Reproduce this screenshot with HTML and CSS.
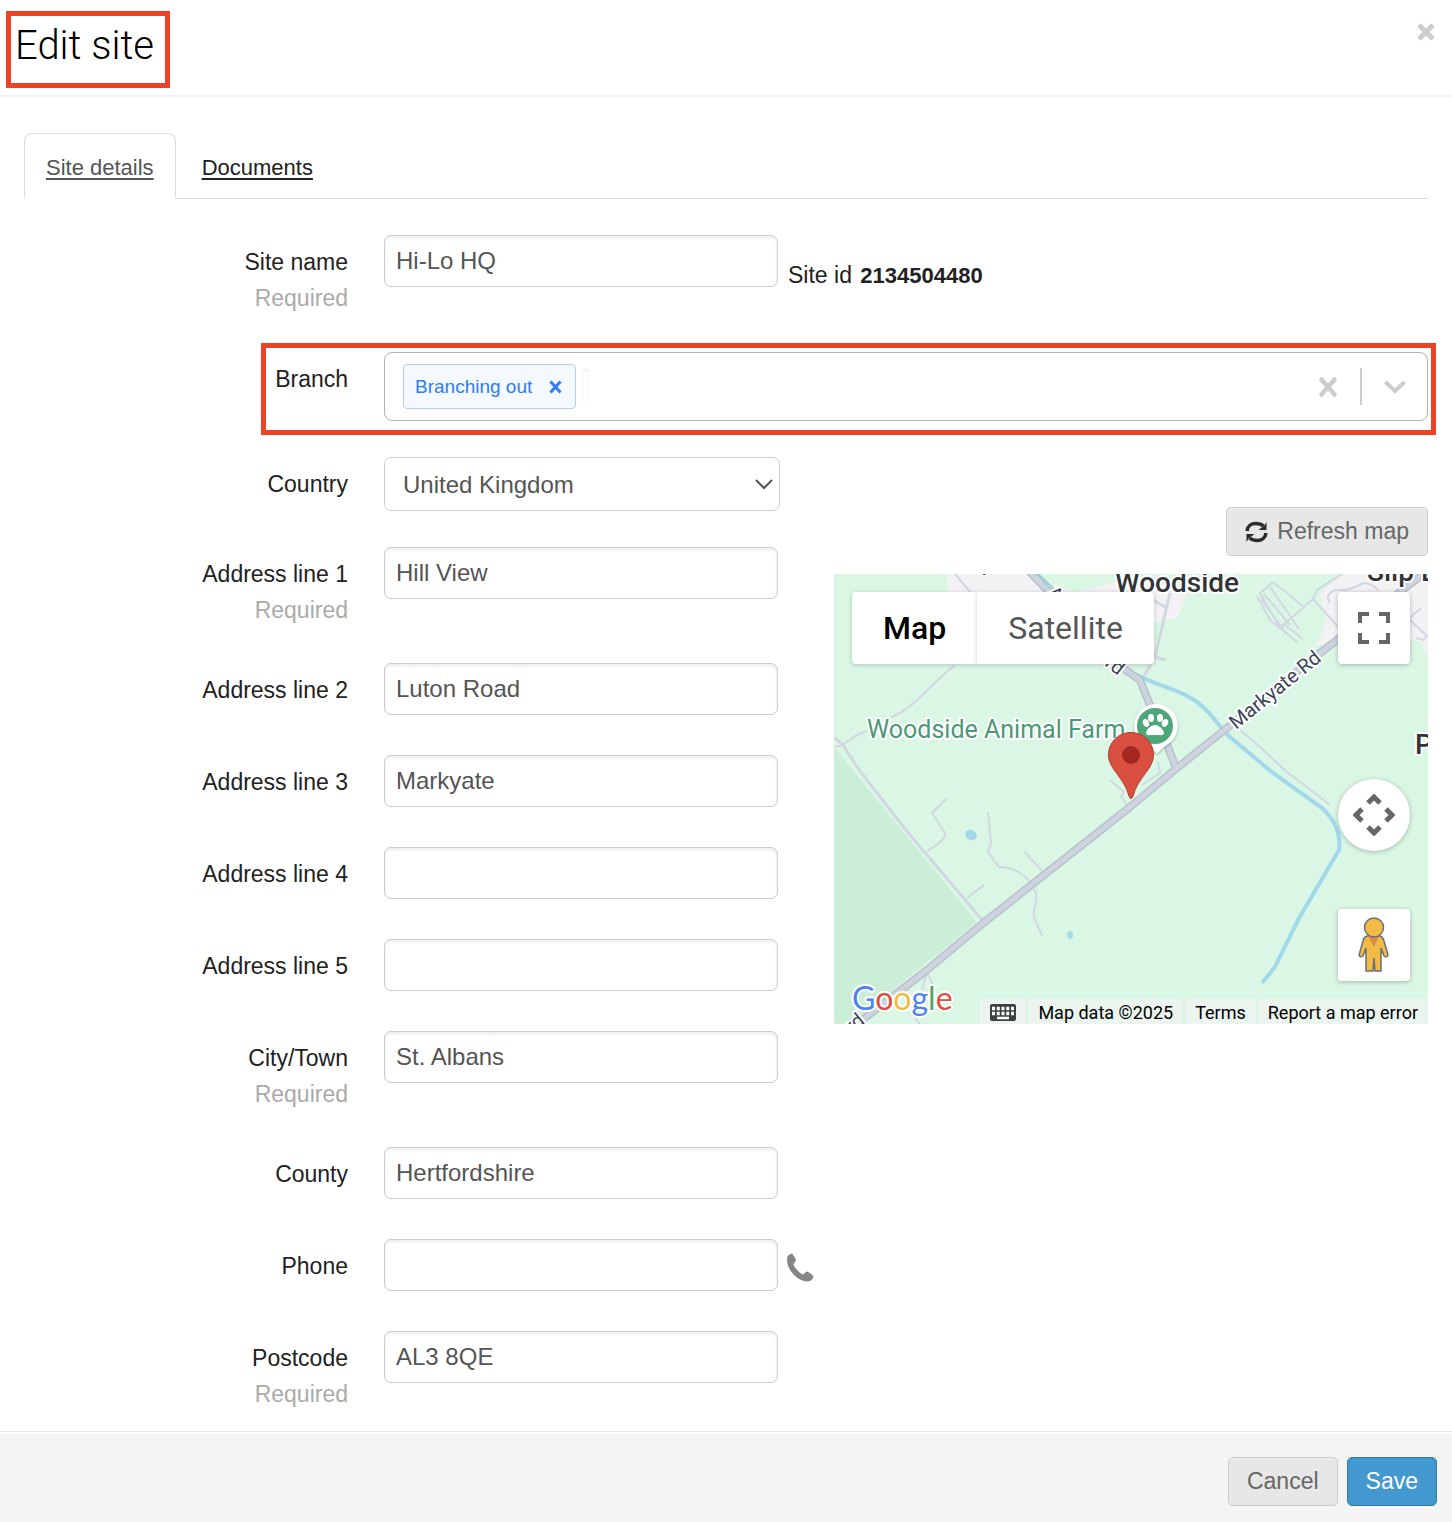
FILE: index.html
```html
<!DOCTYPE html>
<html lang="en">
<head>
<meta charset="utf-8">
<title>Edit site</title>
<meta name="viewport" content="width=device-width, initial-scale=1">
<link rel="stylesheet" href="styles.css">
</head>
<body>
<header class="dialog-header">
  <h1 class="dialog-title">Edit site</h1>
  <button class="close" type="button" aria-label="Close">
    <svg width="18" height="18" viewBox="0 0 18 18"><path d="M2 2L16 16M16 2L2 16" stroke="#ccc" stroke-width="5"/></svg>
  </button>
</header>

<form class="dialog-form">
  <main class="dialog-body">
    <nav class="tabs">
      <a class="tab tab-active" href="#details">Site details</a>
      <a class="tab" href="#documents">Documents</a>
    </nav>

    <div class="row row-name">
      <label class="label" for="name">Site name <span class="hint">Required</span></label>
      <input class="input" id="name" type="text" value="Hi-Lo HQ">
      <p class="site-id">Site id <strong>2134504480</strong></p>
    </div>

    <div class="row row-branch">
      <label class="label" for="branch">Branch</label>
      <div class="multi">
        <span class="chip">Branching out
          <button class="icon-button" type="button" aria-label="Remove Branching out">
            <svg width="13" height="14" viewBox="0 0 13 14"><path d="M1.500 1.500L11.500 12.500M11.500 1.500L1.500 12.500" stroke="#2e7cf6" stroke-width="3"/></svg>
          </button>
        </span>
        <input class="multi-input" id="branch" type="text">
        <button class="icon-button multi-clear" type="button" aria-label="Clear all">
          <svg width="18" height="20" viewBox="0 0 18 20"><path d="M2.500 2.500L15.500 17.500M15.500 2.500L2.500 17.500" stroke="#ccc" stroke-width="4.500" stroke-linecap="round"/></svg>
        </button>
        <span class="multi-divider"></span>
        <button class="icon-button" type="button" aria-label="Show branches">
          <svg width="22" height="14" viewBox="0 0 22 14"><path d="M2.500 3L11 11L19.500 3" fill="none" stroke="#ccc" stroke-width="4" stroke-linecap="round"/></svg>
        </button>
      </div>
    </div>

    <div class="address">
      <div class="address-fields">
        <div class="row row-select">
          <label class="label" for="country">Country</label>
          <div class="select-wrap">
            <select class="input select" id="country"><option>United Kingdom</option></select>
            <svg class="select-arrow" width="18" height="11" viewBox="0 0 18 11"><path d="M1 1L9 9L17 1" fill="none" stroke="#555" stroke-width="2"/></svg>
          </div>
        </div>
        <div class="row row-required">
          <label class="label" for="a1">Address line 1 <span class="hint">Required</span></label>
          <input class="input" id="a1" type="text" value="Hill View">
        </div>
        <div class="row">
          <label class="label" for="a2">Address line 2</label>
          <input class="input" id="a2" type="text" value="Luton Road">
        </div>
        <div class="row">
          <label class="label" for="a3">Address line 3</label>
          <input class="input" id="a3" type="text" value="Markyate">
        </div>
        <div class="row">
          <label class="label" for="a4">Address line 4</label>
          <input class="input" id="a4" type="text">
        </div>
        <div class="row">
          <label class="label" for="a5">Address line 5</label>
          <input class="input" id="a5" type="text">
        </div>
        <div class="row row-required">
          <label class="label" for="city">City/Town <span class="hint">Required</span></label>
          <input class="input" id="city" type="text" value="St. Albans">
        </div>
        <div class="row">
          <label class="label" for="county">County</label>
          <input class="input" id="county" type="text" value="Hertfordshire">
        </div>
        <div class="row">
          <label class="label" for="phone">Phone</label>
          <input class="input" id="phone" type="tel">
          <svg class="phone-icon" width="28" height="30" viewBox="0 0 28 30"><path d="M1 6C1 3 3 1 6 .500C7.500 2 9.500 5 10 7.500C9.500 9 7.500 10 7.500 11.500C9 15.500 13.500 20 17 21.500C18.500 21 19.500 18.500 21 18.500C23.500 19.500 26.500 21.500 27.500 23.500C27 26.500 24 28.500 21 28.500C12 28.500 .500 17 1 6Z" fill="#868686"/></svg>
        </div>
        <div class="row row-required">
          <label class="label" for="postcode">Postcode <span class="hint">Required</span></label>
          <input class="input" id="postcode" type="text" value="AL3 8QE">
        </div>
      </div>

      <section class="map-column">
        <button class="button" type="button">
          <svg width="23" height="22" viewBox="0 0 23 22"><g fill="none" stroke="#2b2b2b" stroke-width="3.500"><path d="M2 10C2.500 5 6.500 2.500 10.500 2.500C14 2.500 16 3 18.500 5"/><path d="M21 12C20.500 17 16.500 19.500 12.500 19.500C9 19.500 7 19 4.500 17"/></g><path d="M21.500 1V9H13.500L16 7L19 5ZM1.500 21V13H9.500L7 15L4 17Z" fill="#2b2b2b"/></svg>
          Refresh map
        </button>
        <div class="map">
          <svg class="map-canvas" viewBox="0 0 594 450" preserveAspectRatio="xMidYMid slice">
            <rect width="594" height="450" fill="#daf6e4"/>
            <path d="M0 173L33 214L143 348L16 450H0Z" fill="#cbeed8"/>
            <path d="M113 0H196L240 18L300 4L356 14L343 44L319 49L250 60L114 30Z" fill="#f3f1f3"/>
            <path d="M509 0H594V86L588 69L576 64L540 60L504 66L479 73L488 61L491 46L486 19Z" fill="#f3f1f3"/>
            <g fill="none" stroke="#d2d8e2" stroke-width="2">
              <path d="M0 163L9 171L23 193L46 223L76 261L149 347" stroke-width="3"/>
              <path d="M0 173L9 171Q22 160 33 157M56 144C80 134 95 112 121 91M121 0L138 20"/>
              <path d="M113 224L98 239L111 259Q112 266 93 277M154 238L157 269L154 278L165 293C182 293 196 303 202 319C204 330 198 336 200 343L208 362M190 277L208 297M150 311L133 324M93 398L88 416M93 398L99 411M81 444L86 450"/>
              <path d="M406 156L426 173L453 198L496 231"/>
              <path d="M336 19L321 83L308 106M321 83L332 86M319 26L333 34" stroke-width="3"/>
              <path d="M508 0L483 16L479 25L446 54M479 25L506 55M496 29C490 20 500 15 506 16C516 17 522 12 530 9Q540 10 544 17M576 44L587 34M576 46L593 62L589 66L582 64"/>
              <path d="M439 8L426 19L446 54L470 33L439 8M423 22L436 46L463 68M436 13L465 55M430 20L456 51M446 54L463 68M427 25L450 56M450 50L469 65"/>
              <path d="M276 206L290 218L287 223L293 231M324 188L326 199L308 211"/>
            </g>
            <path d="M293 95C310 108 338 113 353 122C374 132 381 149 396 163L439 199L488 234C501 246 507 260 505 276L464 346L441 393L428 409" fill="none" stroke="#a2d9ea" stroke-width="4"/>
            <ellipse cx="137" cy="261" rx="6" ry="5" transform="rotate(35 137 261)" fill="#a2d9ea"/>
            <ellipse cx="236" cy="361" rx="3" ry="4" fill="#a2d9ea"/>
            <g fill="none" stroke="#b7c1c9" stroke-width="8" stroke-linejoin="round">
              <path d="M194 -4L286 92L306 106L318 136L334 173L342 194"/>
              <path d="M14 457L93 396L148 350L296 233L343 194L393 154L486 79L600 -8"/>
            </g>
            <g fill="none" stroke="#cdd4e0" stroke-width="5" stroke-linejoin="round">
              <path d="M194 -4L286 92L306 106L318 136L334 173L342 194"/>
              <path d="M14 457L93 396L148 350L296 233L343 194L393 154L486 79L600 -8"/>
            </g>
            <path d="M202 -2L220 15" stroke="#8ed4d6" stroke-width="2"/>
            <g class="map-text">
              <text class="place" x="281" y="18">Woodside</text>
              <text class="place" x="533" y="7">Slip E</text>
              <text class="place" x="581" y="180">P</text>
              <text class="farm" x="33" y="164">Woodside Animal Farm</text>
              <text class="street" transform="translate(402 156) rotate(-39)">Markyate Rd</text>
              <text class="street" transform="translate(212 20) rotate(46)">A</text>
              <text class="street" transform="translate(270 91) rotate(38)">rd</text>
              <text class="street" transform="translate(18 460) rotate(-39)">rd</text>
              <text class="street" x="148" y="-3">y</text>
              <text class="logo" x="18" y="436"><tspan fill="#4d84f0">G</tspan><tspan fill="#dc4e41">o</tspan><tspan fill="#f2bb41">o</tspan><tspan fill="#4d84f0">g</tspan><tspan fill="#57a55c">l</tspan><tspan fill="#dc4e41">e</tspan></text>
            </g>
            <path class="drop" d="M322 130A22 22 0 0 1 337 168Q328 174 323 180Q318 174 307 168A22 22 0 0 1 322 130Z" fill="#fff"/>
            <circle cx="321" cy="152" r="18" fill="#4ea67b"/>
            <g fill="#fff"><ellipse cx="312" cy="149" rx="3" ry="4" transform="rotate(-25 312 149)"/><ellipse cx="317" cy="144" rx="3" ry="4"/><ellipse cx="326" cy="144" rx="3" ry="4"/><ellipse cx="331" cy="149" rx="3" ry="4" transform="rotate(25 331 149)"/><path d="M321 151C326 151 330 157 330 159C330 162 326 161 321 161C316 161 312 162 312 159C312 157 316 151 321 151Z"/></g>
            <path d="M297 158.500C309 158.500 319.500 168 319.500 181C319.500 195 304 203 299 222Q297 227 295 222C290 203 274.500 195 274.500 181C274.500 168 285 158.500 297 158.500Z" fill="#da5040" stroke="#b73529"/>
            <circle cx="297" cy="181" r="9" fill="#a52820"/>
          </svg>
          <div class="map-types">
            <button class="map-type map-type-active" type="button">Map</button>
            <button class="map-type" type="button">Satellite</button>
          </div>
          <button class="map-control map-fullscreen" type="button" aria-label="Toggle fullscreen">
            <svg width="32" height="32" viewBox="0 0 32 32"><path d="M2 11V2H11M21 2H30V11M30 21V30H21M11 30H2V21" fill="none" stroke="#666" stroke-width="4"/></svg>
          </button>
          <button class="map-control map-camera" type="button" aria-label="Map camera controls">
            <svg width="42" height="42" viewBox="0 0 42 42"><path d="M15 9L21 3L27 9M15 33L21 39L27 33M9 15L3 21L9 27M33 15L39 21L33 27" fill="none" stroke="#666" stroke-width="5"/></svg>
          </button>
          <button class="map-control map-pegman" type="button" aria-label="Street View">
            <svg width="32" height="56" viewBox="0 0 32 56"><path d="M9 19Q6 20 5 24L1 38Q2 41 5 39L8 31V54H15L16 41L17 54H23V31L26 39Q29 41 30 38L26 24Q25 20 22 19Z" fill="#f2bb45" stroke="#6b6f78" stroke-width="1.500"/><path d="M10 19H21L16 30Z" fill="#d98a45"/><circle cx="16" cy="10.500" r="9.500" fill="#f2bb45" stroke="#6b6f78" stroke-width="1.500"/></svg>
          </button>
          <div class="map-credits">
            <button class="credit" type="button" aria-label="Keyboard shortcuts">
              <svg width="26" height="17" viewBox="0 0 26 17"><rect width="26" height="17" rx="2" fill="#3c4043"/><path d="M2 4.500H24M2 9.500H24" stroke="#fff" stroke-width="3.500" stroke-dasharray="3 1.750"/><path d="M7 14H19" stroke="#fff" stroke-width="2.500"/></svg>
            </button>
            <span class="credit">Map data ©2025</span>
            <a class="credit" href="#terms">Terms</a>
            <a class="credit" href="#report">Report a map error</a>
          </div>
        </div>
      </section>
    </div>
  </main>

  <footer class="dialog-footer">
    <button class="button" type="button">Cancel</button>
    <button class="button button-primary" type="submit">Save</button>
  </footer>
</form>
</body>
</html>
```
FILE: styles.css
```css
* { box-sizing: border-box; }

body {
  margin: 0;
  background: #fff;
  color: #222;
  font: 23px/36px "Liberation Sans", Arial, sans-serif;
}

button, input, select { font-family: inherit; margin: 0; }
svg { display: block; flex: none; }

/* Header */
.dialog-header {
  display: flex;
  justify-content: space-between;
  align-items: flex-start;
  padding: 11px 17px 7px 6px;
  border-bottom: 2px solid #f3f3f3;
}
.dialog-title {
  margin: 0;
  padding: 6px 11px 13px 4px;
  border: 5px solid #ec4226;
  color: #000;
  font: 300 40px/48px Roboto, sans-serif;
}
.close {
  padding: 0;
  margin-top: 12px;
  border: 0;
  background: none;
}

/* Tabs */
.dialog-body { padding: 36px 24px 19px; }
.tabs {
  display: flex;
  gap: 4px;
  height: 66px;
  margin-bottom: 36px;
  border-bottom: 1px solid #ddd;
}
.tab {
  height: 66px;
  padding: 16px 21px;
  border: 1px solid transparent;
  color: #222;
  font-size: 22px;
  text-underline-offset: 3px;
}
.tab-active {
  border-color: #ddd;
  border-bottom-color: #fff;
  border-radius: 8px 8px 0 0;
  background: #fff;
  color: #555;
}

/* Form rows */
.row {
  display: flex;
  align-items: flex-start;
  margin-bottom: 40px;
}
.row-required { margin-bottom: 35px; }
.row-name,
.row-select { margin-bottom: 36px; }
.label {
  flex: none;
  width: 324px;
  margin-right: 36px;
  padding-top: 9px;
  text-align: right;
}
.hint { display: block; color: #aaa; }
.input {
  width: 394px;
  height: 52px;
  padding: 0 11px;
  border: 1px solid #ccc;
  border-radius: 7px;
  background: #fff;
  box-shadow: inset 0 2px 3px rgba(0, 0, 0, .08);
  color: #555;
  font-size: 24px;
}
.site-id { margin: 22px 0 0 10px; }
.site-id strong { margin-left: 2px; font-size: 22px; }
.phone-icon { margin: 14px 0 0 8px; }

.select-wrap { position: relative; }
.select {
  appearance: none;
  width: 396px;
  height: 54px;
  padding: 0 18px;
  box-shadow: none;
}
.select-arrow {
  position: absolute;
  top: 22px;
  right: 7px;
  pointer-events: none;
}

/* Branch picker */
.row-branch { position: relative; margin-bottom: 36px; }
.row-branch::after {
  content: "";
  position: absolute;
  inset: -9px -8px -14px 237px;
  border: 5px solid #ec4226;
  pointer-events: none;
}
.multi {
  display: flex;
  flex: 1;
  align-items: center;
  height: 69px;
  padding: 0 21px 0 18px;
  border: 1px solid #b3b3b3;
  border-radius: 8px;
}
.chip {
  display: flex;
  align-items: center;
  gap: 17px;
  height: 45px;
  padding: 0 13px 0 11px;
  border: 1px solid #b2cffb;
  border-radius: 4px;
  background: #f4f8ff;
  color: #2e7cf6;
  font-size: 19px;
}
.icon-button { padding: 0; border: 0; background: none; }
.multi-input {
  width: 6px;
  height: 35px;
  margin-left: 7px;
  padding: 0;
  border: 0;
  border-radius: 3px;
  box-shadow: inset 0 1px 2px #e4e4e4;
}
.multi-clear { margin-left: auto; }
.multi-divider {
  width: 2px;
  height: 37px;
  margin: 0 22px 0 23px;
  background: #ccc;
}

/* Buttons */
.button {
  display: flex;
  align-items: center;
  gap: 9px;
  height: 49px;
  padding: 0 18px;
  border: 1px solid #ccc;
  border-radius: 5px;
  background: #e7e7e7;
  box-shadow: inset 0 2px 2px #ededed;
  color: #666;
  font-size: 23px;
}
.button-primary {
  border-color: #357a98;
  background: #4398cf;
  box-shadow: none;
  color: #fff;
}

/* Address and map */
.address { display: flex; gap: 20px; }
.address-fields { flex: none; width: 790px; }
.address-fields .row:last-child { margin-bottom: 0; }
.map-column {
  display: flex;
  flex: 1;
  flex-direction: column;
  align-items: flex-end;
  gap: 18px;
  padding-top: 50px;
}
.map {
  position: relative;
  width: 100%;
  height: 450px;
  overflow: hidden;
  font-family: Roboto, sans-serif;
}
.map-canvas { width: 100%; height: 100%; }
.map-text text {
  paint-order: stroke;
  stroke: #fff;
  stroke-width: 4px;
  stroke-linejoin: round;
  fill: #3c4557;
}
.map-text .place { font-size: 28px; font-weight: 500; fill: #333438; }
.map-text .farm { font-size: 25px; fill: #4c9878; }
.map-text .street { font-size: 20px; }
.map-text .logo { font: 32px Lato, sans-serif; }
.drop { filter: drop-shadow(0 1px 1px rgba(0, 0, 0, .3)); }

.map-types { position: absolute; top: 18px; left: 18px; display: flex; }
.map-type {
  height: 72px;
  padding: 0 31px;
  border: 0;
  border-radius: 0 4px 4px 0;
  background: #fff;
  box-shadow: 0 1px 5px rgba(0, 0, 0, .2);
  color: #565656;
  font-size: 32px;
}
.map-type-active { border-radius: 4px 0 0 4px; color: #000; font-weight: 500; }
.map-control {
  position: absolute;
  right: 18px;
  display: flex;
  align-items: center;
  justify-content: center;
  width: 72px;
  height: 72px;
  padding: 0;
  border: 0;
  border-radius: 4px;
  background: #fff;
  box-shadow: 0 1px 5px rgba(0, 0, 0, .25);
}
.map-fullscreen { top: 18px; }
.map-camera { bottom: 173px; border-radius: 50%; }
.map-pegman { bottom: 43px; }
.map-credits {
  position: absolute;
  right: 0;
  bottom: 0;
  display: flex;
  gap: 2px;
}
.credit {
  display: flex;
  align-items: center;
  height: 25px;
  padding: 2px 10px 0;
  border: 0;
  background: #ebf4ee;
  color: #000;
  font-size: 18px;
  text-decoration: none;
}

/* Footer */
.dialog-footer {
  display: flex;
  justify-content: flex-end;
  gap: 9px;
  padding: 25px 15px 16px;
  border-top: 1px solid #e8e8e8;
  background: #f4f4f4;
  box-shadow: inset 0 2px 0 #fff;
}
```
